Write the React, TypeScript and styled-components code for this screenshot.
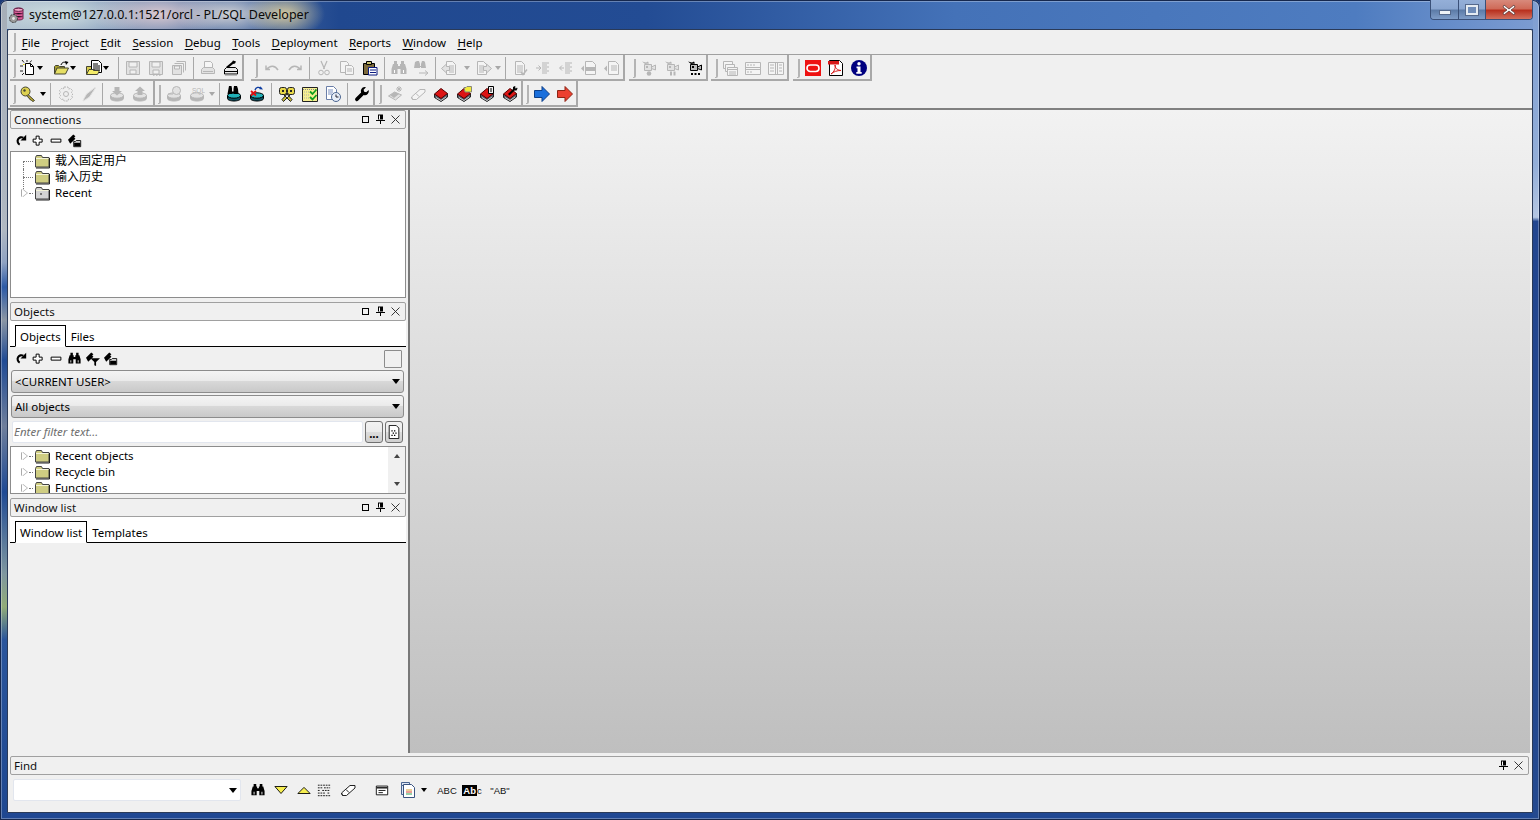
import React from "react";
import styled, { createGlobalStyle } from "styled-components";

// greys used by disabled toolbar icons
const G = "#b6b6b6";
const GF = "#e2e2e2";
const K = "#000";

const Svg = ({ s = 16, children }: { s?: number; children: React.ReactNode }) => (
  <svg width={s} height={s} viewBox="0 0 16 16" fill="none">
    {children}
  </svg>
);

const floppy = (c: string, f: string) => (
  <>
    <path d="M1.5 1.5h13v13h-13z" fill={f} stroke={c} />
    <path d="M4 2h8v5H4zM5 10h6v4H5z" fill="#f0f0f0" stroke={c} />
  </>
);
const printer = (c: string, f: string) => (
  <>
    <path d="M4.5 1.5h6l2 2v4h-8z" fill="#f6f6f6" stroke={c} />
    <path d="M1.5 9.5l2-2h9l2 2v4h-13z" fill={f} stroke={c} />
    <path d="M3 11.5h10" stroke={c} />
  </>
);
const bino = (c: string) => (
  <>
    <path d="M3 1h3v3h1v2h2V4h1V1h3v3h1l1.500 5v5H9.500V9h-3v5H.5V9L2 4h1z" fill={c} />
    <path d="M3 10h1v3H3zM12 10h1v3h-1z" fill="#fff" />
  </>
);
const disk = (top: string, side: string, c: string) => (
  <>
    <path d="M1.5 9.5v3c0 1.5 3 2.5 6.5 2.5s6.5-1 6.5-2.5v-3" fill={side} stroke={c} />
    <ellipse cx="8" cy="9.5" rx="6.5" ry="2.7" fill={top} stroke={c} />
  </>
);
const book = (cover: string) => (
  <>
    <path d="M1.5 8v3.500l6.500 4 6.500-4.500V7.500" fill="#5a6470" stroke="#222" />
    <path d="M3 11.500l5 3 5-3.500" stroke="#c8c8c8" />
    <path d="M1.5 8L8 2.500l6.500 5L8 12.500z" fill={cover} stroke="#500" />
  </>
);
const folder = (f: string) => (
  <>
    <path d="M1.5 4.5l1-2h5l1 2h6.5v9.5H1.5z" fill={f} stroke="#444" />
    <path d="M2 5.5h12.5" stroke="#f4f4d8" />
    <path d="M15.5 5v10H2" stroke="#222" />
  </>
);
const cam = (c: string, f: string) => (
  <>
    <path d="M1 1.5l4 1 2-1 1 2-4 .5z" fill={c} />
    <path d="M3.5 4.5h7v6h-7z" fill={f} stroke={c} />
    <path d="M10.5 7l4-2v5l-4-1.500z" fill={f} stroke={c} />
    <path d="M5 6h2v2H5z" fill={c} />
  </>
);
const pageLines = (c: string) => (
  <>
    <path d="M3.5 1.5h6l3 3v10h-9z" fill="#f4f4f4" stroke={c} />
    <path d="M5 6h6M5 8h6M5 10h6M5 12h6" stroke={c} />
  </>
);
const minusLines = (c: string) => <path d="M7 3h7M7 5h5M7 7h7M7 9h5M7 11h7M7 13h5" stroke={c} />;
const eraser = (c: string, f: string) => (
  <>
    <path d="M1.5 11L10 3.500h5L15 6 6.500 13.500h-4z" fill={f} stroke={c} />
    <path d="M6 7.500l3 3M1.500 11l1 2.500" stroke={c} />
  </>
);

const ICONS: Record<string, React.ReactNode> = {
  new: (
    <>
      <path d="M5.5 3.5h5l3 3v8h-8z" fill="#fff" stroke={K} />
      <path d="M10.5 3.5v3h3" stroke={K} />
      <path d="M2 0l2 2.500M7 0v2M11.500 .5l-1.500 2M0 6h3M0 11h3M2 15l2-2" stroke="#222" />
      <path d="M3 4h1.500v1H3z" fill="#e8d800" />
    </>
  ),
  open: (
    <>
      <path d="M1.5 14V6.500l1-1h3l1 1h5v2" fill="#a8a030" stroke="#443" />
      <path d="M1.5 14l2.500-6h11.500l-3 6z" fill="#e6df64" stroke="#443" />
      <path d="M8 5c1-3 3.500-3.500 5.500-2" stroke={K} />
      <path d="M15.500 2l-3.500-1 1 4z" fill={K} />
    </>
  ),
  recent: (
    <>
      <path d="M.5 14V6.500h5v7.500z" fill="#d8cd50" stroke="#443" />
      <path d="M5.500 .5h7l3 3v9h-10z" fill="#fff" stroke={K} />
      <path d="M7 4h5M7 6h7M7 8h7M7 10h7" stroke={K} />
      <path d="M.5 14.500l2.500-5h5.500l-1 1h6l-2 4z" fill="#f4ec68" stroke="#443" />
    </>
  ),
  save: floppy(G, GF),
  saveas: (
    <>
      {floppy(G, GF)}
      <path d="M5 15h1.500M8 15h1.500M11 15h1.500" stroke={G} strokeWidth="1.500" />
    </>
  ),
  saveall: (
    <>
      <path d="M5.5 1.5h9v9" stroke={G} />
      <path d="M3.5 3.5h9v9" stroke={G} />
      <path d="M1.5 5.5h9v9h-9z" fill={GF} stroke={G} />
      <path d="M3.5 6h5v3h-5z" fill="#f0f0f0" stroke={G} />
    </>
  ),
  print: printer(G, GF),
  printset: (
    <>
      <path d="M1.5 9.5l2-2h9l2 2v4.500h-13z" fill="#e8e8e8" stroke={K} />
      <path d="M2 11.5h12" stroke={K} />
      <path d="M2 14h12v1.500H2z" fill="#888" />
      <path d="M3 7l6-5 1-1.500 3 1-1 2-2 .5-5 4z" fill={K} />
    </>
  ),
  undo: <path d="M2 5.500v4h4M2.500 9.500C6 5 11 5 14 10" stroke={G} strokeWidth="1.500" />,
  redo: <path d="M14 5.500v4h-4M13.500 9.500C10 5 5 5 2 10" stroke={G} strokeWidth="1.500" />,
  cut: (
    <>
      <path d="M5 1l3.500 8M11 1L7.500 9" stroke={G} strokeWidth="1.200" />
      <circle cx="5" cy="12.500" r="2.300" stroke={G} />
      <circle cx="11" cy="12.500" r="2.300" stroke={G} />
    </>
  ),
  copy: (
    <>
      <path d="M1.5 1.5h6l2 2v9h-8z" fill="#f4f4f4" stroke={G} />
      <path d="M6.5 5.5h6l2 2v7h-8z" fill="#f4f4f4" stroke={G} />
      <path d="M8 9h5M8 11h5" stroke={G} />
    </>
  ),
  paste: (
    <>
      <path d="M1.5 3.5h11v11h-11z" fill="#7c6a3c" stroke={K} />
      <path d="M4.5 1.5h5v3h-5z" fill="#c8c070" stroke={K} />
      <path d="M6.5 7.5h8.500v7.500H6.500z" fill="#fff" stroke="#0a1a80" />
      <path d="M8 10h6M8 12.500h6" stroke="#0a1a80" />
    </>
  ),
  binoG: bino(G),
  findnextG: (
    <>
      <path d="M1 2l2-1h2l1 3v2h1V4l1-3h2l1 1 1 6H7V7H6v1H0z" fill={G} />
      <path d="M5 13h8M11 10.500l3 2.500-3 2.500" stroke={G} />
    </>
  ),
  back: (
    <>
      <path d="M5.5 1.5h6l3 3v10h-9z" fill="#f4f4f4" stroke={G} />
      <path d="M8 6h5M8 8h5M8 10h5M8 12h5" stroke={G} />
      <path d="M.5 8.500l5-4.500v2.500h3v4h-3V13z" fill={GF} stroke={G} />
    </>
  ),
  forward: (
    <>
      <path d="M1.5 1.5h6l3 3v10h-9z" fill="#f4f4f4" stroke={G} />
      <path d="M3 6h5M3 8h5M3 10h5M3 12h5" stroke={G} />
      <path d="M15.500 8.500l-5-4.500v2.500h-3v4h3V13z" fill={GF} stroke={G} />
    </>
  ),
  doccheck: (
    <>
      {pageLines(G)}
      <path d="M9 12l2 2.500 4-5" stroke={G} strokeWidth="1.500" />
    </>
  ),
  indent: (
    <>
      {minusLines(G)}
      <path d="M1 8h4M3.500 5.500L6 8l-2.500 2.500" stroke={G} />
    </>
  ),
  outdent: (
    <>
      {minusLines(G)}
      <path d="M6 8H2M4 5.500L1.500 8 4 10.500" stroke={G} />
    </>
  ),
  colL: (
    <>
      <path d="M4.5 1.5h7l3 3v10h-10z" fill="#f4f4f4" stroke={G} />
      <path d="M5 7h9v4H5z" fill={G} />
      <path d="M0 8.500l3-3v6z" fill={G} />
    </>
  ),
  colR: (
    <>
      <path d="M4.5 1.5h7l3 3v10h-10z" fill="#f4f4f4" stroke={G} />
      <path d="M7 6h6M7 8h6M7 10h6" stroke={G} />
      <path d="M0 8.500l3-3v6z" fill={G} />
    </>
  ),
  camRec: (
    <>
      {cam(G, GF)}
      <circle cx="8" cy="13.500" r="2.300" fill={G} />
    </>
  ),
  camPause: (
    <>
      {cam(G, GF)}
      <path d="M6 11.500h2v4H6zM9.500 11.500h2v4h-2z" fill={G} />
    </>
  ),
  camDots: (
    <>
      {cam(K, "#bbb")}
      <path d="M4 13h2v2H4zM7.500 13h2v2h-2zM11 13h2v2h-2z" fill={K} />
    </>
  ),
  winCascade: (
    <>
      <path d="M1.5 1.5h9v7h-9z" fill="#f4f4f4" stroke={G} />
      <path d="M3.5 4.5h9v7h-9z" fill="#f4f4f4" stroke={G} />
      <path d="M5.5 7.5h10v8h-10z" fill="#f4f4f4" stroke={G} />
      <path d="M6 9.5h9" stroke={G} />
      <path d="M7 12h7M7 14h7" stroke={G} />
    </>
  ),
  winH: (
    <>
      <path d="M.5 2.500h15v12H.5z" fill="#f4f4f4" stroke={G} />
      <path d="M1 7.500h14M1 9.500h14" stroke={G} />
      <path d="M2 5h2M5 5h2M8 5h2M2 12h2M5 12h2" stroke={G} />
    </>
  ),
  winV: (
    <>
      <path d="M.5 2.500h15v12H.5z" fill="#f4f4f4" stroke={G} />
      <path d="M7.5 3v11M9.500 3v11" stroke={G} />
      <path d="M2 5h4M2 8h4M2 11h4M11 5h3M11 8h3M11 11h3" stroke={G} />
    </>
  ),
  oracle: (
    <>
      <path d="M0 0h16v16H0z" fill="#ee1111" />
      <rect x="2" y="5" width="12" height="6.500" rx="3.250" stroke="#fff" strokeWidth="1.600" />
    </>
  ),
  pdf: (
    <>
      <path d="M1.5 .5h10l3 3v12h-13z" fill="#fff" stroke={K} />
      <path d="M0 1h11v3.500H0z" fill="#d81818" />
      <path d="M3 14c3-2 5-6 4-9 0 3 2 5 6 5.500-4 0-7 1-10 3.500z" stroke="#d81818" />
    </>
  ),
  info: (
    <>
      <circle cx="8" cy="8" r="8" fill="#000080" />
      <circle cx="8" cy="3.800" r="1.700" fill="#fff" />
      <path d="M5.500 6.500h4V12h1.200v1.800H5.300V12h1.200V8.200H5.500z" fill="#fff" />
    </>
  ),
  key: (
    <>
      <circle cx="5.500" cy="5.500" r="4.500" fill="#dcd050" stroke="#443" />
      <circle cx="4.500" cy="4.500" r="1.200" fill="#443" />
      <path d="M8 8.500l6.500 6-1.500 1-1.500-1-1-.5-.5-1-1-.5-2-3z" fill="#b8a830" stroke="#443" />
    </>
  ),
  gear: (
    <>
      <path d="M6 1h4l.5 2 2-.5 2 2-1 2L15 8l-1.500 1.500 1 2-2 2-2-.5-.5 2H6l-.5-2-2 .5-2-2 1-2L1 8l1.500-1.500-1-2 2-2 2 .5z" fill="#efefef" stroke={G} strokeDasharray="2 1" />
      <circle cx="8" cy="8" r="2.500" stroke={G} />
    </>
  ),
  pen: <path d="M14 1.500l.5.500-6 9L4 14l-2 1 1-2.500L5.500 8z" fill={G} stroke={GF} />,
  dbDown: (
    <>
      {disk(GF, G, G)}
      <path d="M5.500 1h5v4H13L8 9.500 3 5h2.500z" fill={G} />
    </>
  ),
  dbUp: (
    <>
      {disk(GF, G, G)}
      <path d="M5.500 9h5V5H13L8 .5 3 5h2.500z" fill={G} />
    </>
  ),
  dbCoins: (
    <>
      {disk(GF, G, G)}
      <circle cx="10.500" cy="4.500" r="4" fill={GF} stroke={G} />
      <path d="M2 8h5" stroke={G} />
    </>
  ),
  dbSql: (
    <>
      {disk(GF, G, G)}
      <text x="3" y="6.500" fontSize="6.500" fontFamily="Liberation Sans" fill={G}>SQL</text>
    </>
  ),
  dbBino: (
    <>
      {disk("#20b0b8", "#0a5060", K)}
      <path d="M3 0h2.500l.5 2.500v3h1.500V3l.5-3H11l1 3 .5 5h-5V7h-1v1h-5z" fill={K} />
    </>
  ),
  dbX: (
    <>
      {disk("#20b0b8", "#0a5060", K)}
      <path d="M6 4c1-3 4-3.500 5.500-1.500" stroke="#0a3aa0" strokeWidth="1.300" />
      <path d="M14 3.500l-3.500-.2 1-3z" fill="#0a3aa0" />
      <path d="M2 5l5 4.500M7 5L2 9.500" stroke="#e01010" strokeWidth="1.800" />
    </>
  ),
  keys: (
    <>
      <path d="M7 7l6 6.500-1.500 2L5 9zM9 7L3 13.500l1.500 2L11 9z" fill="#cfc038" stroke="#222" />
      <rect x=".5" y="1.500" width="7" height="7" rx="2" fill="#e8d848" stroke="#222" />
      <rect x="8.500" y="1.500" width="7" height="7" rx="2" fill="#e8d848" stroke="#222" />
      <path d="M3 4h2v2H3zM11 4h2v2h-2z" fill="#222" />
    </>
  ),
  checklist: (
    <>
      <path d="M.5 1.500h15v14H.5z" fill="#f6ee90" stroke="#222" />
      <path d="M1 3.500h14" stroke="#888" strokeDasharray="1 1" />
      <path d="M2 6h6M2 9h6M2 12h6" stroke="#aaa" strokeDasharray="1 1" />
      <path d="M8 5.500l2.500 2.500 4-4.500M8 11l2.500 2.500 4-4.500" stroke="#10a020" strokeWidth="1.800" />
    </>
  ),
  docClock: (
    <>
      <path d="M1.5 .5h7l3 3v10h-10z" fill="#fff" stroke="#6a7ea8" />
      <path d="M3 4h5M3 6h5M3 8h4" stroke="#7a90c0" />
      <circle cx="11" cy="11" r="4.500" fill="#e8eef8" stroke="#4a6490" />
      <path d="M11 8.500V11h2.500" stroke="#223" />
    </>
  ),
  wrench: (
    <path d="M10.500 1a4 4 0 0 1 1.500.3L9.600 3.700l.6 2 2 .6L14.700 4a4 4 0 0 1-5 5l-5.500 5.600a1.700 1.700 0 0 1-2.600-2.500l5.500-5.600A4 4 0 0 1 10.500 1z" fill={K} />
  ),
  bookStar: (
    <>
      <path d="M1.500 10l6-4 7 3-6 5z" fill={GF} stroke={G} />
      <path d="M3 9l5-3 4 2-5 4z" fill={G} />
      <path d="M12 0v6M9 3h6M10 1l4 4M14 1l-4 4" stroke={G} />
    </>
  ),
  eraserG: eraser(G, "#f4f4f4"),
  bookRed: book("#dc1414"),
  bookYellow: (
    <>
      {book("#dc1414")}
      <path d="M8 1.500h2l1-1h4.500v5.500H9z" fill="#f2ea3c" stroke="#887" />
    </>
  ),
  bookDoc: (
    <>
      {book("#dc1414")}
      <path d="M9.500 .5h5v7h-5z" fill="#f4f4f4" stroke={K} />
      <path d="M11 3h2M11 5h2" stroke={K} />
    </>
  ),
  bookWrench: (
    <>
      {book("#dc1414")}
      <path d="M6 8l5-5V1l2-1 .5 1-.5 1 1 .5 1-1 .5 1-1 2-2 0-5 5z" fill={K} />
    </>
  ),
  arrowBlue: <path d="M.5 4.500H8v-4L15.500 8 8 15.500v-4H.5z" fill="#1a6fdc" stroke="#0c3f88" />,
  arrowRed: <path d="M.5 4.500H8v-4L15.500 8 8 15.500v-4H.5z" fill="#ec4030" stroke="#8c2414" />,
  refresh: (
    <>
      <path d="M11.500 4.500A4.500 4.500 0 1 0 7 13" stroke={K} strokeWidth="2.600" />
      <path d="M15 1v7H8z" fill={K} />
    </>
  ),
  plus: <path d="M5.500 1.500h4v4h4v4h-4v4h-4v-4h-4v-4h4z" fill="#fff" stroke={K} strokeWidth="1.300" />,
  minus: <path d="M1.500 5.500h13v4h-13z" fill="#fff" stroke={K} strokeWidth="1.300" />,
  conn: (
    <>
      <path d="M0 6.500L6 .5l2.500 2-1.500 1.500 1.500 1.500L2.500 11z" fill={K} />
      <path d="M6.500 8.500h2l1-1h5v7h-8z" fill="#ddd" stroke={K} />
      <path d="M7 10h7v4H7z" fill={K} />
    </>
  ),
  filterConn: (
    <>
      <path d="M0 6.500L6 .5l2.500 2-1.500 1.500 1.500 1.500L2.500 11z" fill={K} />
      <path d="M5 7h11l-4.500 4.500V16L9.500 15v-3.500z" fill={K} />
    </>
  ),
  bino: bino(K),
  triDown: <path d="M1 4h14l-7 8z" fill="#f6ee50" stroke={K} />,
  triUp: <path d="M1 12h14L8 5z" fill="#f6ee50" stroke={K} />,
  lines: <path d="M1 2.500h14M1 5.500h5M8 5.500h7M1 8.500h3M6 8.500h9M1 11.500h9M12 11.500h3M1 14.500h14" stroke={K} strokeDasharray="2 1" />,
  eraser: eraser("#222", "#fff"),
  card: (
    <>
      <path d="M1.500 3.500h13v10h-13z" fill="#fff" stroke={K} />
      <path d="M2 5.500h12" stroke={K} strokeWidth="1.500" />
      <path d="M4 8.500h8M4 11h5" stroke={K} />
    </>
  ),
  docs: (
    <>
      <path d="M1.500 .5h8v3h-8z" fill="#dde6f4" stroke="#4a6490" />
      <path d="M1.500 3.500h2v9h-2z" fill="#dde6f4" stroke="#4a6490" />
      <path d="M3.500 2.500h8l3 3v10h-11z" fill="#fff" stroke="#3a5480" />
      <path d="M6 8h6" stroke="#d8a030" />
      <path d="M6 10h6" stroke="#d84030" />
      <path d="M6 12h6" stroke="#30a050" />
    </>
  ),
  pageDots: (
    <>
      <path d="M2.500 .5h8l3 3v12h-11z" fill="#fff" stroke={K} />
      <path d="M5 6h1.500v1.500H5zM8 6h1.500v1.500H8zM6.500 8.500H8V10H6.500zM9.500 8.500H11V10H9.500zM5 11h1.500v1.500H5zM8 11h1.500v1.500H8z" fill={K} />
    </>
  ),
  folderY: folder("#cfcd82"),
  folderG: (
    <>
      {folder("#d4d4d4")}
      <path d="M6 8l2 2M8 8l-2 2" stroke="#777" />
    </>
  ),
};

const Icon = ({ n, s }: { n: string; s?: number }) => <Svg s={s}>{ICONS[n]}</Svg>;

type Item =
  | { k: "i"; n: string }
  | { k: "s"; w: number }
  | { k: "a"; w: number; x: number; dim?: boolean };

const sep = (w = 6): Item => ({ k: "s", w });
const arr = (w: number, x: number, dim?: boolean): Item => ({ k: "a", w, x, dim });
const icons = (...names: string[]): Item[] => names.map((n) => ({ k: "i", n }));

interface BandDef {
  gap: number;
  pad: number;
  grip: number;
  pr?: number;
  items: Item[];
}

const ROW1: BandDef[] = [
  {
    gap: 0, pad: 3, grip: 0,
    items: [
      ...icons("new"), arr(10, 1), ...icons("open"), arr(10, 1), ...icons("recent"), arr(10, 1),
      sep(), ...icons("save", "saveas", "saveall"), sep(), ...icons("print", "printset"),
    ],
  },
  {
    gap: 7, pad: 4, grip: 2,
    items: [
      ...icons("undo", "redo"), sep(), ...icons("cut", "copy", "paste"), sep(),
      ...icons("binoG", "findnextG"), sep(4), ...icons("back"), arr(12, 7, true),
      ...icons("forward"), arr(7, 3, true), sep(),
      ...icons("doccheck", "indent", "outdent", "colL", "colR"),
    ],
  },
  { gap: 4, pad: 4, grip: 1, items: icons("camRec", "camPause", "camDots") },
  { gap: 3, pad: 4, grip: 0, items: icons("winCascade", "winH", "winV") },
  { gap: 4, pad: 4, grip: 1, items: icons("oracle", "pdf", "info") },
];

const ROW2: BandDef[] = [
  {
    gap: 0, pad: 3, grip: 0, pr: 2,
    items: [
      ...icons("key"), arr(8, 4), sep(7), ...icons("gear", "pen"), sep(5), ...icons("dbDown", "dbUp"),
    ],
  },
  {
    gap: 0, pad: 3, grip: 1,
    items: [
      ...icons("dbCoins", "dbSql"), arr(8, 4, true), sep(), ...icons("dbBino", "dbX"), sep(7),
      ...icons("keys", "checklist", "docClock"), sep(), ...icons("wrench"),
    ],
  },
  {
    gap: 0, pad: 4, grip: 1,
    items: icons("bookStar", "eraserG", "bookRed", "bookYellow", "bookDoc", "bookWrench"),
  },
  { gap: 0, pad: 3, grip: 1, items: icons("arrowBlue", "arrowRed") },
];

const MENUS = ["File", "Project", "Edit", "Session", "Debug", "Tools", "Deployment", "Reports", "Window", "Help"];

const App: React.FC = () => (
  <Frame>
    <GlobalStyle />
    <TitleBar>
      <TitleIcon>
        <svg width="17" height="17" viewBox="0 0 17 17">
          <path d="M6 2.500c0-2 9-2 9 0v9c0 2-9 2-9 0z" fill="#d85c96" stroke="#6a2048" />
          <ellipse cx="10.500" cy="2.800" rx="4.500" ry="1.600" fill="#f0a8c8" stroke="#6a2048" />
          <path d="M6 6c1 1.500 8 1.500 9 0M6 9c1 1.500 8 1.500 9 0" stroke="#8a2c60" />
          <circle cx="5.500" cy="11.500" r="4" fill="#9a9a9a" stroke="#333" strokeDasharray="2 1" />
          <circle cx="5.500" cy="11.500" r="1.400" fill="#e8e8e8" />
        </svg>
      </TitleIcon>
      <TitleText>system@127.0.0.1:1521/orcl - PL/SQL Developer</TitleText>
      <CaptionGroup>
        <CaptionBtn $w={28}><MinGlyph /></CaptionBtn>
        <CaptionBtn $w={27}><MaxGlyph /></CaptionBtn>
        <CloseBtn>
          <svg width="14" height="12" viewBox="0 0 14 12">
            <path d="M2 1l5 4 5-4 1 2-4 3 4 3-1 2-5-4-5 4-1-2 4-3-4-3z" fill="#fff" stroke="#5a3a3a" strokeWidth=".8" />
          </svg>
        </CloseBtn>
      </CaptionGroup>
    </TitleBar>
    <Client>
      <MenuBar>
        <Grip />
        {MENUS.map((m) => (
          <MenuItem key={m}>
            <u>{m[0]}</u>
            {m.slice(1)}
          </MenuItem>
        ))}
      </MenuBar>
      {[ROW1, ROW2].map((row, r) => (
        <ToolRow key={r}>
          {row.map((b, i) => (
            <Band key={i} $gap={b.gap} $pad={b.pad} $pr={b.pr ?? 0}>
              <Grip $mr={b.grip} />
              {b.items.map((it, j) =>
                it.k === "i" ? (
                  <ToolBtn key={j}><Icon n={it.n} /></ToolBtn>
                ) : it.k === "s" ? (
                  <Sep key={j} $w={it.w} />
                ) : (
                  <DropSlot key={j} $w={it.w} $x={it.x}><DropTri $dim={it.dim} /></DropSlot>
                )
              )}
            </Band>
          ))}
        </ToolRow>
      ))}
      <Main>
        <Dock>
          <PanelHead>
            Connections
            <HeadIcons>
              <HeadSquare /><PinGlyph /><CloseGlyph />
            </HeadIcons>
          </PanelHead>
          <PanelTools>
            <ToolBtn $w={18}><Icon n="refresh" s={13} /></ToolBtn>
            <ToolBtn $w={18}><Icon n="plus" s={12} /></ToolBtn>
            <ToolBtn $w={18}><Icon n="minus" s={12} /></ToolBtn>
            <ToolBtn $w={19}><Icon n="conn" s={14} /></ToolBtn>
          </PanelTools>
          <TreeBox $h={147}>
            <TreeRow><TreeSlot $line="down" /><Icon n="folderY" /><TreeLabel $cjk>载入固定用户</TreeLabel></TreeRow>
            <TreeRow><TreeSlot $line="through" /><Icon n="folderY" /><TreeLabel $cjk>输入历史</TreeLabel></TreeRow>
            <TreeRow><TreeSlot $open /><Icon n="folderG" /><TreeLabel>Recent</TreeLabel></TreeRow>
          </TreeBox>

          <PanelHead $top={4}>
            Objects
            <HeadIcons>
              <HeadSquare /><PinGlyph /><CloseGlyph />
            </HeadIcons>
          </PanelHead>
          <TabStrip>
            <ActiveTab>Objects</ActiveTab>
            <Tab>Files</Tab>
          </TabStrip>
          <ObjectTools>
            <ToolBtn $w={18}><Icon n="refresh" s={13} /></ToolBtn>
            <ToolBtn $w={18}><Icon n="plus" s={12} /></ToolBtn>
            <ToolBtn $w={18}><Icon n="minus" s={12} /></ToolBtn>
            <ToolBtn $w={18}><Icon n="bino" s={13} /></ToolBtn>
            <ToolBtn $w={19}><Icon n="filterConn" s={14} /></ToolBtn>
            <ToolBtn $w={18}><Icon n="conn" s={14} /></ToolBtn>
            <SquareBtn />
          </ObjectTools>
          <ComboBar>&lt;CURRENT USER&gt;<ComboTri /></ComboBar>
          <ComboBar>All objects<ComboTri /></ComboBar>
          <FilterRow>
            <FilterInput placeholder="Enter filter text..." />
            <MiniBtn>...</MiniBtn>
            <MiniBtn $icon><Icon n="pageDots" s={14} /></MiniBtn>
          </FilterRow>
          <TreeBox $h={48} $row>
            <TreeRows>
              <TreeRow><TreeSlot $open /><Icon n="folderY" /><TreeLabel>Recent objects</TreeLabel></TreeRow>
              <TreeRow><TreeSlot $open /><Icon n="folderY" /><TreeLabel>Recycle bin</TreeLabel></TreeRow>
              <TreeRow><TreeSlot $open /><Icon n="folderY" /><TreeLabel>Functions</TreeLabel></TreeRow>
            </TreeRows>
            <ScrollTrack>
              <ScrollUp />
              <ScrollDown />
            </ScrollTrack>
          </TreeBox>

          <PanelHead $top={4}>
            Window list
            <HeadIcons>
              <HeadSquare /><PinGlyph /><CloseGlyph />
            </HeadIcons>
          </PanelHead>
          <TabStrip>
            <ActiveTab>Window list</ActiveTab>
            <Tab>Templates</Tab>
          </TabStrip>
        </Dock>
        <Mdi />
      </Main>
      <FindPanel>
        <PanelHead>
          Find
          <HeadIcons>
            <PinGlyph /><CloseGlyph />
          </HeadIcons>
        </PanelHead>
        <FindRow>
          <FindCombo><ComboTri /></FindCombo>
          <ToolBtn $w={24}><Icon n="bino" s={14} /></ToolBtn>
          <ToolBtn $w={22}><Icon n="triDown" s={14} /></ToolBtn>
          <ToolBtn $w={23}><Icon n="triUp" s={14} /></ToolBtn>
          <ToolBtn $w={18}><Icon n="lines" s={14} /></ToolBtn>
          <ToolBtn $w={30}><Icon n="eraser" s={16} /></ToolBtn>
          <ToolBtn $w={38}><Icon n="card" s={14} /></ToolBtn>
          <ToolBtn $w={14}><Icon n="docs" /></ToolBtn>
          <DropSlot $w={24} $x={9}><DropTri /></DropSlot>
          <FindText $w={16}>ABC</FindText>
          <FindText $w={34}><Inverted>Ab</Inverted>c</FindText>
          <FindText $w={22}>"AB"</FindText>
        </FindRow>
      </FindPanel>
    </Client>
  </Frame>
);

export default App;

const GlobalStyle = createGlobalStyle`
  html, body { margin: 0; padding: 0; width: 1540px; height: 820px; overflow: hidden; background: #1c3a78; }
  * { box-sizing: border-box; }
  body { font-family: "Noto Sans", "Noto Sans CJK SC", sans-serif; font-size: 11.5px; color: #000; }
`;

const Frame = styled.div`
  width: 1540px;
  height: 820px;
  display: flex;
  flex-direction: column;
  padding: 0 7px 7px;
  border-radius: 7px 7px 0 0;
  box-shadow: inset 0 0 0 1px #16284e, inset 0 0 0 2px rgba(255, 255, 255, 0.3);
  background:
    linear-gradient(180deg, #a6aeb8 0, #b0b8c2 28%, #8fa2c2 32%, #2c5aa6 35%, #8b96a4 39%, #1f4a94 44%, #6f7f9c 52%, #1f4a94 60%, #7f97a0 70%, #92ac78 74%, #2a559c 78%, #1e4790 100%) left top / 7px 100% no-repeat,
    linear-gradient(180deg, #7f9ed2 0, #93aed8 20%, #b4c6e2 26.5%, #23468f 27%, #24498f 100%) right top / 7px 100% no-repeat,
    linear-gradient(180deg, #1f4793, #1f4793) left bottom / 100% 7px no-repeat,
    radial-gradient(ellipse 40px 24px at 285px 14px, rgba(240, 220, 160, 0.85), transparent) 0 0 / 100% 29px no-repeat,
    radial-gradient(ellipse 55px 24px at 230px 14px, rgba(230, 225, 220, 0.85), transparent) 0 0 / 100% 29px no-repeat,
    radial-gradient(ellipse 70px 24px at 160px 14px, rgba(225, 205, 210, 0.95), transparent) 0 0 / 100% 29px no-repeat,
    radial-gradient(ellipse 90px 26px at 60px 14px, rgba(210, 225, 225, 0.95), transparent) 0 0 / 100% 29px no-repeat,
    linear-gradient(90deg, #b0c0d0 0, #20488f 22%, #234c94 42%, #4472b8 62%, #4e7cc0 88%, #7d9dd2 100%) 0 0 / 100% 29px no-repeat,
    #1f4793;
`;

const TitleBar = styled.div`
  height: 29px;
  flex: none;
  display: flex;
  align-items: flex-start;
  padding-left: 1px;
`;

const TitleIcon = styled.div`
  width: 20px;
  margin-top: 7px;
  line-height: 0;
`;

const TitleText = styled.div`
  margin: 6px 0 0 1px;
  font-size: 12.5px;
  line-height: 18px;
  color: #0a0a0a;
`;

const CaptionGroup = styled.div`
  margin-left: auto;
  width: 103px;
  flex: none;
  display: flex;
  height: 20px;
  border: 1px solid #3a5078;
  border-top: none;
  border-radius: 0 0 4px 4px;
  overflow: hidden;
`;

const CaptionBtn = styled.div<{ $w: number }>`
  width: ${(p) => p.$w}px;
  flex: none;
  display: flex;
  align-items: center;
  justify-content: center;
  background: linear-gradient(180deg, #94afd8 0, #8aa6d0 48%, #5b7aa6 52%, #7f9dc8 100%);
  border-right: 1px solid #3a5078;
`;

const CloseBtn = styled.div`
  flex: 1;
  display: flex;
  align-items: center;
  justify-content: center;
  background: linear-gradient(180deg, #d88a7c 0, #cf6a58 46%, #b8301e 54%, #d2705e 100%);
`;

const MinGlyph = styled.div`
  width: 12px;
  height: 5px;
  margin-top: 5px;
  background: #eef2f6;
  border: 1px solid #55698c;
`;

const MaxGlyph = styled.div`
  width: 12px;
  height: 10px;
  border: 2px solid #e4ebf2;
  outline: 1px solid #55698c;
  background: #6f8cb8;
`;

const Client = styled.div`
  flex: 1;
  display: flex;
  flex-direction: column;
  min-height: 0;
  background: #f0f0f0;
  border: 1px solid #2a3a58;
  border-radius: 2px 2px 0 0;
`;

const MenuBar = styled.div`
  height: 25px;
  flex: none;
  display: flex;
  align-items: center;
  padding-left: 5px;
  border-bottom: 1px solid #a0a0a0;
`;

const MenuItem = styled.div`
  padding: 0 5.7px;
  line-height: 17px;
  color: #000;
  &:first-of-type { margin-left: 3px; }
  u { text-underline-offset: 2px; }
`;

const Grip = styled.div<{ $mr?: number }>`
  width: 3px;
  height: 19px;
  flex: none;
  margin-right: ${(p) => p.$mr ?? 0}px;
  border-right: 2px solid #b4b4b4;
  border-bottom: 1px solid #b4b4b4;
  border-bottom-right-radius: 2px;
`;

const ToolRow = styled.div`
  height: 26px;
  flex: none;
  display: flex;
  padding-left: 2px;
`;

const Band = styled.div<{ $gap: number; $pad: number; $pr: number }>`
  display: flex;
  align-items: center;
  margin-left: ${(p) => p.$gap}px;
  padding-top: 2px;
  padding-left: ${(p) => p.$pad}px;
  padding-right: ${(p) => p.$pr}px;
  border-right: 2px solid #a8a8a8;
  border-bottom: 2px solid #a8a8a8;
`;

const ToolBtn = styled.div<{ $w?: number }>`
  width: ${(p) => p.$w ?? 23}px;
  height: 22px;
  flex: none;
  display: flex;
  align-items: center;
  justify-content: center;
  svg { flex: none; }
`;

const Sep = styled.div<{ $w: number }>`
  width: ${(p) => p.$w}px;
  height: 22px;
  flex: none;
  display: flex;
  justify-content: center;
  &::before { content: ""; width: 1px; background: #a8a8a8; }
`;

const DropSlot = styled.div<{ $w: number; $x: number }>`
  width: ${(p) => p.$w}px;
  flex: none;
  display: flex;
  align-items: center;
  margin-left: ${(p) => (p.$x < 3 ? p.$x - 3 : 0)}px;
  margin-right: ${(p) => (p.$x < 3 ? 3 - p.$x : 0)}px;
  padding-left: ${(p) => (p.$x < 3 ? 0 : p.$x - 3)}px;
`;

const DropTri = styled.div<{ $dim?: boolean }>`
  width: 0;
  height: 0;
  border-left: 3.5px solid transparent;
  border-right: 3.5px solid transparent;
  border-top: 4px solid ${(p) => (p.$dim ? "#a8a8a8" : "#000")};
`;

const Main = styled.div`
  flex: 1;
  min-height: 0;
  display: flex;
  margin-top: 1px;
  border-top: 2px solid #808080;
`;

const Dock = styled.div`
  width: 400px;
  flex: none;
  display: flex;
  flex-direction: column;
  padding: 0 2px;
`;

const Mdi = styled.div`
  flex: 1;
  margin-right: 2px;
  border-left: 2px solid #787878;
  background: linear-gradient(180deg, #f2f2f2 0, #bfbfbf 100%);
`;

const PanelHead = styled.div<{ $top?: number }>`
  height: 19px;
  flex: none;
  display: flex;
  align-items: center;
  margin-top: ${(p) => p.$top ?? 0}px;
  padding: 0 0 1px 3px;
  border: 1px solid #a0a0a0;
  border-radius: 2px;
  color: #111;
`;

const HeadIcons = styled.div`
  margin-left: auto;
  display: flex;
  align-items: center;
  gap: 6px;
  padding-right: 5px;
`;

const HeadSquare = styled.div`
  width: 7px;
  height: 7px;
  margin-right: 1px;
  border: 1px solid #000;
`;

const PinGlyph = () => (
  <svg width="9" height="10" viewBox="0 0 9 10">
    <path d="M2 .5h5v5H2zM0 6h9v1H0zM4 7h1v3H4z" fill="#000" />
    <path d="M3 1.500h1v4H3z" fill="#fff" />
  </svg>
);

const CloseGlyph = () => (
  <svg width="9" height="9" viewBox="0 0 9 9">
    <path d="M.5.5l8 8M8.500.5l-8 8" stroke="#222" strokeWidth=".9" />
  </svg>
);

const PanelTools = styled.div`
  height: 22px;
  flex: none;
  display: flex;
  align-items: center;
  padding-left: 1px;
  padding-top: 1px;
`;

const ObjectTools = styled(PanelTools)`
  height: 23px;
  padding-top: 0;
`;

const SquareBtn = styled.div`
  width: 18px;
  height: 18px;
  margin-left: auto;
  margin-right: 4px;
  border: 1px solid #8c8c8c;
  border-radius: 1px;
  background: #f0f0f0;
`;

const TreeBox = styled.div<{ $h: number; $row?: boolean }>`
  height: ${(p) => p.$h}px;
  flex: none;
  display: flex;
  flex-direction: ${(p) => (p.$row ? "row" : "column")};
  margin-top: ${(p) => (p.$row ? 2 : 0)}px;
  padding-top: ${(p) => (p.$row ? 0 : 1)}px;
  overflow: hidden;
  background: #fff;
  border: 1px solid #8c8c8c;
`;

const TreeRows = styled.div`
  flex: 1;
  padding-top: 1px;
  overflow: hidden;
`;

const TreeRow = styled.div`
  height: 16px;
  flex: none;
  display: flex;
  align-items: center;
  padding-left: 8px;
`;

const TreeSlot = styled.div<{ $line?: "down" | "through"; $open?: boolean }>`
  position: relative;
  width: 15px;
  height: 16px;
  flex: none;
  &::before {
    content: "";
    position: absolute;
    left: ${(p) => (p.$open ? 10 : 4)}px;
    right: 1px;
    top: 8px;
    border-top: 1px dotted #777;
  }
  &::after {
    content: "";
    position: absolute;
    ${(p) =>
      p.$open
        ? `left: 3px; top: 4px; border-left: 5px solid #fff; border-top: 4px solid transparent; border-bottom: 4px solid transparent; filter: drop-shadow(1px 0 0 #aaa) drop-shadow(-1px 0 0 #aaa);`
        : `left: 4px; width: 0; border-left: 1px dotted #777; top: ${p.$line === "down" ? 8 : 0}px; bottom: ${p.$line === "through" ? -8 : 0}px;`}
  }
`;

const TreeLabel = styled.span<{ $cjk?: boolean }>`
  margin-left: 5px;
  font-size: ${(p) => (p.$cjk ? 12 : 11.5)}px;
  white-space: nowrap;
  line-height: 16px;
`;

const ScrollTrack = styled.div`
  width: 17px;
  flex: none;
  display: flex;
  flex-direction: column;
  justify-content: space-between;
  align-items: center;
  padding: 7px 0;
  background: #f0f0f0;
`;

const ScrollUp = styled.div`
  border-left: 3.5px solid transparent;
  border-right: 3.5px solid transparent;
  border-bottom: 4px solid #444;
`;

const ScrollDown = styled.div`
  border-left: 3.5px solid transparent;
  border-right: 3.5px solid transparent;
  border-top: 4px solid #444;
`;

const TabStrip = styled.div`
  height: 26px;
  flex: none;
  display: flex;
  align-items: flex-end;
  padding-left: 5px;
  background: #fff;
  border-bottom: 1px solid #000;
`;

const Tab = styled.div`
  height: 22px;
  margin-bottom: -1px;
  padding-left: 5px;
  line-height: 24px;
`;

const ActiveTab = styled.div`
  height: 22px;
  margin-bottom: -1px;
  padding: 0 4px;
  line-height: 22px;
  background: #fff;
  border: 1px solid #000;
  border-bottom: 1px solid #fff;
`;

const ComboBar = styled.div`
  position: relative;
  height: 23px;
  width: 393px;
  flex: none;
  margin: 0 0 2px 1px;
  display: flex;
  align-items: center;
  padding: 0 3px;
  border: 1px solid #8c8c8c;
  border-radius: 3px;
  background: linear-gradient(180deg, #f4f4f4 0, #ebebeb 45%, #d8d8d8 50%, #c9c9c9 100%);
`;

const ComboTri = styled.div`
  position: absolute;
  right: 3px;
  top: 8px;
  border-left: 4px solid transparent;
  border-right: 4px solid transparent;
  border-top: 5px solid #000;
`;

const FilterRow = styled.div`
  height: 24px;
  flex: none;
  display: flex;
  align-items: center;
  gap: 2px;
  padding-left: 2px;
`;

const FilterInput = styled.input`
  width: 351px;
  height: 22px;
  padding: 0 1px 2px;
  border: 1px solid #e2e6ee;
  border-radius: 2px;
  outline: none;
  background: #fff;
  font: italic 11.5px "Noto Sans", sans-serif;
  &::placeholder { color: #6e6e6e; opacity: 1; }
`;

const MiniBtn = styled.div<{ $icon?: boolean }>`
  width: 18px;
  height: 22px;
  display: flex;
  align-items: ${(p) => (p.$icon ? "center" : "flex-end")};
  justify-content: center;
  padding-bottom: ${(p) => (p.$icon ? 0 : 3)}px;
  border: 1px solid #707070;
  border-radius: 3px;
  font-weight: 700;
  line-height: 10px;
  background: linear-gradient(180deg, #f2f2f2, #ebebeb 50%, #dcdcdc 52%, #cfcfcf);
`;

const FindPanel = styled.div`
  height: 56px;
  flex: none;
  margin: 3px 3px 0 2px;
  display: flex;
  flex-direction: column;
`;

const FindRow = styled.div`
  flex: 1;
  display: flex;
  align-items: center;
  padding: 0 0 7px 3px;
`;

const FindCombo = styled.div`
  position: relative;
  width: 228px;
  height: 22px;
  margin-right: 5px;
  flex: none;
  background: #fff;
  border: 1px solid #e2e6ee;
  border-radius: 2px;
`;

const FindText = styled.div<{ $w: number }>`
  width: ${(p) => p.$w}px;
  flex: none;
  display: flex;
  align-items: center;
  justify-content: center;
  font: 9.5px "Liberation Sans", sans-serif;
  color: #111;
  white-space: nowrap;
`;

const Inverted = styled.span`
  background: #000;
  color: #fff;
  padding: 0 1px;
  font-weight: 700;
`;
